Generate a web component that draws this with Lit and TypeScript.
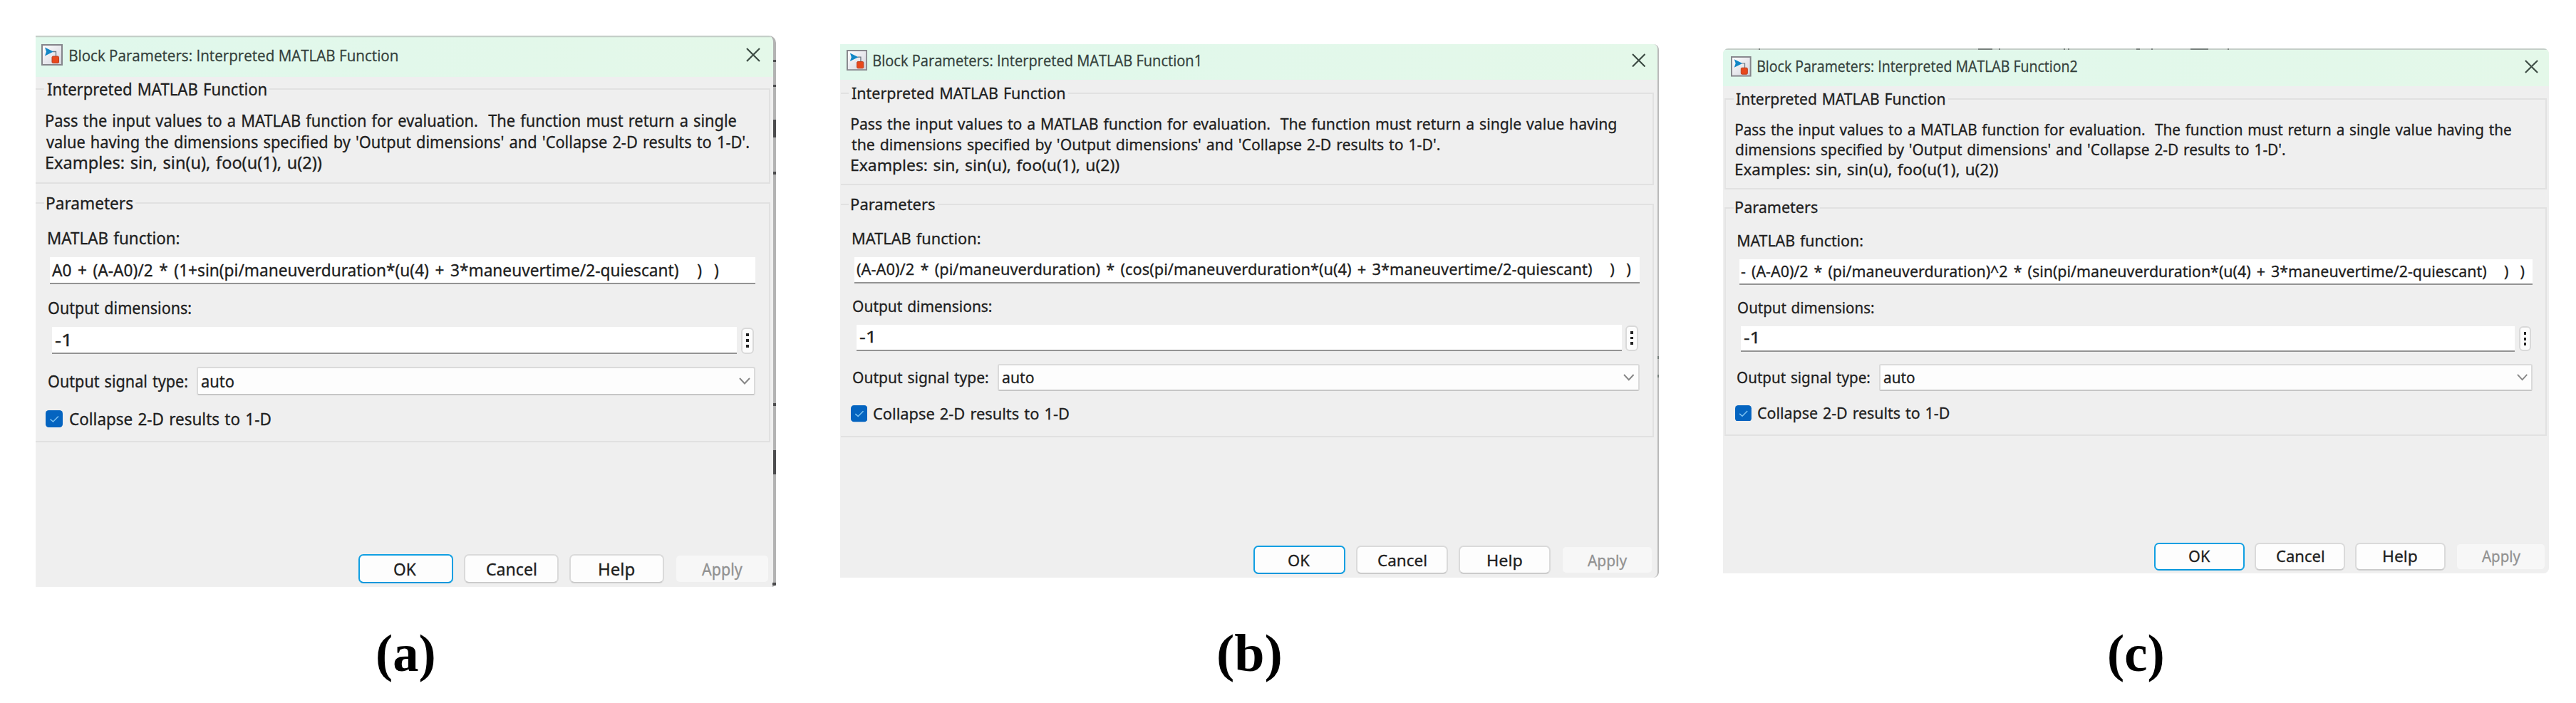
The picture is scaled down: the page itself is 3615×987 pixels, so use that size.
import { LitElement, html, css, svg } from 'lit';
import { customElement, property } from 'lit/decorators.js';
import { styleMap } from 'lit/directives/style-map.js';

interface Mark {
  x: number;
  y: number;
  w: number;
  h: number;
}

interface DialogSpec {
  caption: string;
  captionWidth: number;
  top: number;
  zoom: number;
  width: number;
  barHeight: number;
  barPad: number;
  barGap: number;
  left: number;
  right: number;
  edge: string;
  title: string;
  titleWidth: number;
  description: [string, number][];
  formula: string;
  formulaWidth: number;
  marks: Mark[];
}

const UI_FONT = '"Noto Sans"';
const TITLE_FONT = '"Open Sans"';

const DIALOGS: DialogSpec[] = [
  {
    caption: '(a)',
    captionWidth: 79,
    top: 50,
    zoom: 1,
    width: 1039,
    barHeight: 58,
    barPad: 4,
    barGap: 16,
    left: 0,
    right: 8.5,
    edge: 'top-line thick-edge',
    title: 'Block Parameters: Interpreted MATLAB Function',
    titleWidth: 460,
    description: [
      ['Pass the input values to a MATLAB function for evaluation.  The function must return a single', 968],
      ["value having the dimensions specified by 'Output dimensions' and 'Collapse 2-D results to 1-D'.", 986],
      ['Examples: sin, sin(u), foo(u(1), u(2))', 386],
    ],
    formula: 'A0 + (A-A0)/2 * (1+sin(pi/maneuverduration*(u(4) + 3*maneuvertime/2-quiescant)   )  )',
    formulaWidth: 935,
    marks: [
      { x: 1035, y: 34, w: 4, h: 3 },
      { x: 1035, y: 69, w: 4, h: 3 },
      { x: 1035, y: 118, w: 4, h: 25 },
      { x: 1035, y: 191, w: 4, h: 4 },
      { x: 1035, y: 516, w: 4, h: 4 },
      { x: 1035, y: 582, w: 4, h: 34 },
      { x: 1034, y: 768, w: 5, h: 4 },
    ],
  },
  {
    caption: '(b)',
    captionWidth: 87,
    top: 62,
    zoom: 0.973,
    width: 1180.5,
    barHeight: 51,
    barPad: 5,
    barGap: 19,
    left: 1,
    right: 6.5,
    edge: 'thin-edge',
    title: 'Block Parameters: Interpreted MATLAB Function1',
    titleWidth: 470,
    description: [
      ['Pass the input values to a MATLAB function for evaluation.  The function must return a single value having', 1104],
      ["the dimensions specified by 'Output dimensions' and 'Collapse 2-D results to 1-D'.", 849],
      ['Examples: sin, sin(u), foo(u(1), u(2))', 386],
    ],
    formula: '(A-A0)/2 * (pi/maneuverduration) * (cos(pi/maneuverduration*(u(4) + 3*maneuvertime/2-quiescant)   )  )',
    formulaWidth: 1117,
    marks: [
      { x: 1178.5, y: 450, w: 2, h: 4 },
      { x: 1178.5, y: 477, w: 2, h: 4 },
    ],
  },
  {
    caption: '(c)',
    captionWidth: 75,
    top: 68,
    zoom: 0.953,
    width: 1217,
    barHeight: 56,
    barPad: 2,
    barGap: 17.8,
    left: 4,
    right: 3.5,
    edge: 'top-line boxed',
    title: 'Block Parameters: Interpreted MATLAB Function2',
    titleWidth: 470.5,
    description: [
      ['Pass the input values to a MATLAB function for evaluation.  The function must return a single value having the', 1142],
      ["dimensions specified by 'Output dimensions' and 'Collapse 2-D results to 1-D'.", 809],
      ['Examples: sin, sin(u), foo(u(1), u(2))', 386],
    ],
    formula: '- (A-A0)/2 * (pi/maneuverduration)^2 * (sin(pi/maneuverduration*(u(4) + 3*maneuvertime/2-quiescant)   )  )',
    formulaWidth: 1154,
    marks: [
      { x: 53, y: 0, w: 2, h: 2 },
      { x: 376, y: 0, w: 21, h: 2 },
      { x: 407, y: 0, w: 2, h: 2 },
      { x: 502, y: 0, w: 2, h: 2 },
      { x: 508, y: 0, w: 2, h: 2 },
      { x: 609, y: 0, w: 5, h: 2 },
      { x: 631, y: 0, w: 2, h: 2 },
      { x: 689, y: 0, w: 26, h: 2 },
      { x: 743, y: 0, w: 2, h: 2 },
    ],
  },
];

const canvas = document.createElement('canvas').getContext('2d')!;

// Stretches a run of text horizontally so that its ink is exactly `width` wide.
function fit(text: string, width: number, size = 23, family = UI_FONT, weight = 400, wordSpacing = 1.5) {
  canvas.font = `${weight} ${size}px ${family}`;
  const m = canvas.measureText(text);
  const spaces = text.split(' ').length - 1;
  const scale = width / (m.actualBoundingBoxLeft + m.actualBoundingBoxRight + spaces * wordSpacing);
  const shift = m.actualBoundingBoxLeft * scale;
  return html`<span
    style=${styleMap({
      display: 'inline-block',
      width: `${width}px`,
      whiteSpace: 'pre',
      wordSpacing: `${wordSpacing}px`,
      transformOrigin: '0 50%',
      transform: `translateX(${shift.toFixed(2)}px) scaleX(${scale.toFixed(4)})`,
    })}
    >${text}</span
  >`;
}

const simulinkIcon = svg`
  <svg class="icon" viewBox="0 0 30 30">
    <defs>
      <linearGradient id="face" x1="0" y1="0" x2="1" y2="1">
        <stop offset="0" stop-color="#ffffff" />
        <stop offset="1" stop-color="#d3d3dc" />
      </linearGradient>
    </defs>
    <rect x="1" y="1" width="28" height="28" fill="url(#face)" stroke="#85858b" stroke-width="2" />
    <path d="M16 10.500H20.500V18" fill="none" stroke="#6d7680" stroke-width="1.300" />
    <path d="M5 4.500L17 10.500L5 16.500L7 10.500Z" fill="#1287c6" />
    <rect x="15" y="17" width="9.500" height="9.500" rx="1.500" fill="#e8481c" stroke="#b93d1e" stroke-width="1" />
  </svg>
`;

@customElement('block-dialog')
export class BlockDialog extends LitElement {
  static styles = css`
    :host {
      display: block;
    }

    .frame {
      position: relative;
    }

    .window {
      box-sizing: border-box;
      overflow: hidden;
      background: #efefef;
      color: #202020;
      font: 400 23px/30px 'Noto Sans', sans-serif;
      -webkit-text-stroke: 0.3px;
    }

    .titlebar {
      box-sizing: border-box;
      display: flex;
      align-items: center;
      background: linear-gradient(90deg, #e0f8ec, #e4f8e9);
    }

    .top-line .titlebar {
      box-shadow: inset 0 2.2px #c4cec8;
    }

    .thick-edge .window {
      border-right: 4px solid #b3b3b3;
      border-top-right-radius: 10px;
      border-bottom-right-radius: 6px;
    }

    .thin-edge .window {
      border-right: 2.2px solid #bababa;
      border-top-right-radius: 8px;
      border-bottom-right-radius: 8px;
    }

    .boxed .window {
      border-radius: 8px 8px 8px 0;
    }

    .icon {
      width: 30px;
      height: 30px;
      flex: none;
    }

    .title {
      margin-left: 9.5px;
      font: 400 22px/30px 'Open Sans', sans-serif;
      color: #34403b;
    }

    .close {
      width: 20px;
      height: 20px;
      margin-left: auto;
    }

    .thick-edge .close {
      margin-right: 18px;
    }

    .thin-edge .close {
      margin-right: 17px;
    }

    .boxed .close {
      margin-right: 16px;
    }

    .group {
      box-sizing: border-box;
      border: 2.2px solid #e1e1e1;
      border-left: 0;
      padding-right: 19px;
    }

    .boxed .group {
      border-left: 2.2px solid #e4e4e4;
      margin-left: -1px;
    }

    .boxed .group > * {
      margin-left: -1px;
    }

    .about {
      height: 134px;
    }

    .parameters {
      height: 337px;
      margin-top: 26px;
    }

    .legend {
      display: block;
      width: fit-content;
      margin-top: -16.5px;
      padding-left: 15.5px;
      height: 30px;
    }

    .legend > span {
      display: block;
      padding: 0 4px;
      margin-left: -4px;
      background: #efefef;
    }

    .description {
      padding: 15.5px 0 0 15px;
      line-height: 29.5px;
    }

    .description > div {
      height: 29.5px;
    }

    .label {
      height: 30px;
      padding-left: 18px;
    }

    .first {
      padding-top: 19.5px;
    }

    .second {
      padding-top: 18px;
    }

    .field {
      box-sizing: border-box;
      flex: 1;
      height: 38px;
      padding: 2.5px 0 0 3px;
      background: #fff;
      border-bottom: 2.2px solid #939393;
    }

    .row {
      display: flex;
      align-items: center;
      padding-top: 12px;
      padding-left: 20px;
    }

    .dimensions {
      padding-left: 23px;
      gap: 6px;
    }

    .dimensions .field {
      padding-left: 4px;
    }

    .more {
      box-sizing: border-box;
      width: 18px;
      height: 37px;
      margin-right: 2px;
      display: flex;
      flex-direction: column;
      align-items: center;
      justify-content: center;
      gap: 4px;
      background: #fcfcfc;
      border: 2.2px solid #d9d9d9;
      border-radius: 6px;
    }

    .more i {
      width: 4px;
      height: 4px;
      background: #222;
    }

    .signal {
      padding: 18px 0 0 17.5px;
      gap: 13.5px;
    }

    .combo {
      box-sizing: border-box;
      flex: 1;
      height: 40px;
      display: flex;
      align-items: center;
      justify-content: space-between;
      padding: 0 5px;
      background: #fdfdfd;
      border: 2.2px solid #dadada;
      border-bottom-color: #c6c6c6;
      border-radius: 3px;
    }

    .chevron {
      width: 16px;
      height: 10px;
    }

    .collapse {
      padding: 17.5px 0 0 14px;
      gap: 9.5px;
    }

    .check {
      width: 24px;
      height: 24px;
    }

    .buttons {
      display: flex;
      justify-content: flex-end;
      gap: 15px;
      padding: 157px 1px 5px 0;
    }

    .button {
      box-sizing: border-box;
      width: 133px;
      height: 41px;
      display: flex;
      align-items: center;
      justify-content: center;
      background: #fdfdfd;
      border: 2.2px solid #dadada;
      border-bottom-color: #cbcbcb;
      border-radius: 7px;
    }

    .ok {
      border-color: #109fe2;
      border-bottom-color: #0797dc;
    }

    .apply {
      background: #f7f7f7;
      background-clip: padding-box;
      border-color: transparent;
      color: #919191;
    }

    .mark {
      position: absolute;
      background: #4c4c4e;
    }

    .thin-edge .mark,
    .boxed .mark {
      background: #77807c;
    }
  `;

  @property({ attribute: false }) spec!: DialogSpec;

  get edgeWidth() {
    if (this.spec.edge.includes('thick-edge')) return 4;
    return this.spec.edge.includes('thin-edge') ? 2 : 0;
  }

  render() {
    const s = this.spec;
    return html`
      <div class="frame ${s.edge}" style=${styleMap({ zoom: `${s.zoom}` })}>
        <div class="window" style=${styleMap({ width: `${s.width}px` })}>
          <div
            class="titlebar"
            style=${styleMap({ height: `${s.barHeight}px`, paddingBottom: `${s.barPad}px`, paddingLeft: `${8 + s.left}px` })}
          >
            ${simulinkIcon}
            <span class="title">${fit(s.title, s.titleWidth, 22, TITLE_FONT, 400, 0)}</span>
            <svg class="close" viewBox="0 0 20 20">
              <path d="M1 1L19 19M19 1L1 19" fill="none" stroke="#3c4a43" stroke-width="2.2" />
            </svg>
          </div>
          <div
            style=${styleMap({ paddingTop: `${s.barGap}px`, paddingLeft: `${s.left}px`, paddingRight: `${s.right - this.edgeWidth}px` })}
          >
            ${this.renderAbout()} ${this.renderParameters()} ${this.renderButtons()}
          </div>
        </div>
        ${s.marks.map(
          (m) => html`<i
            class="mark"
            style=${styleMap({ left: `${m.x}px`, top: `${m.y}px`, width: `${m.w}px`, height: `${m.h}px` })}
          ></i>`,
        )}
      </div>
    `;
  }

  renderAbout() {
    return html`
      <div class="group about">
        <div class="legend"><span>${fit('Interpreted MATLAB Function', 308)}</span></div>
        <div class="description">
          ${this.spec.description.map(([text, width]) => html`<div>${fit(text, width)}</div>`)}
        </div>
      </div>
    `;
  }

  renderParameters() {
    return html`
      <div class="group parameters">
        <div class="legend"><span>${fit('Parameters', 120)}</span></div>
        <div class="label first">${fit('MATLAB function:', 183.5)}</div>
        <div class="row">
          <div class="field">${fit(this.spec.formula, this.spec.formulaWidth, 23, UI_FONT, 400, 2.7)}</div>
        </div>
        <div class="label second">${fit('Output dimensions:', 200)}</div>
        <div class="row dimensions">
          <div class="field">${fit('-1', 20)}</div>
          <div class="more"><i></i><i></i><i></i></div>
        </div>
        <div class="row signal">
          ${fit('Output signal type:', 195)}
          <div class="combo">
            ${fit('auto', 45)}
            <svg class="chevron" viewBox="0 0 16 10">
              <path d="M1 1L8 8.500L15 1" fill="none" stroke="#878787" stroke-width="2" />
            </svg>
          </div>
        </div>
        <div class="row collapse">
          <svg class="check" viewBox="0 0 24 24">
            <rect width="24" height="24" rx="4.500" fill="#0464c0" />
            <path d="M6.500 12.500L10.500 16L18 8.500" fill="none" stroke="#7fc4f2" stroke-width="1.500" />
          </svg>
          ${fit('Collapse 2-D results to 1-D', 282)}
        </div>
      </div>
    `;
  }

  renderButtons() {
    return html`
      <div class="buttons">
        <div class="button ok">${fit('OK', 31.5)}</div>
        <div class="button">${fit('Cancel', 69)}</div>
        <div class="button">${fit('Help', 49)}</div>
        <div class="button apply">${fit('Apply', 57)}</div>
      </div>
    `;
  }
}

@customElement('app-root')
export class AppRoot extends LitElement {
  static styles = css`
    :host {
      display: block;
      height: 987px;
      overflow: hidden;
      background: #fff;
    }

    .page {
      display: flex;
      gap: 90px;
      height: 100%;
      padding-left: 50px;
    }

    .figure {
      box-sizing: border-box;
      height: 100%;
      display: flex;
      flex-direction: column;
      align-items: center;
      padding-bottom: 33.5px;
    }

    .caption {
      margin-top: auto;
      font: 700 74px/74px 'Liberation Serif', serif;
      color: #000;
    }
  `;

  render() {
    return html`
      <div class="page">
        ${DIALOGS.map(
          (d) => html`
            <div class="figure" style=${styleMap({ paddingTop: `${d.top}px` })}>
              <block-dialog .spec=${d}></block-dialog>
              <div class="caption">${fit(d.caption, d.captionWidth, 74, '"Liberation Serif"', 700, 0)}</div>
            </div>
          `,
        )}
      </div>
    `;
  }
}
